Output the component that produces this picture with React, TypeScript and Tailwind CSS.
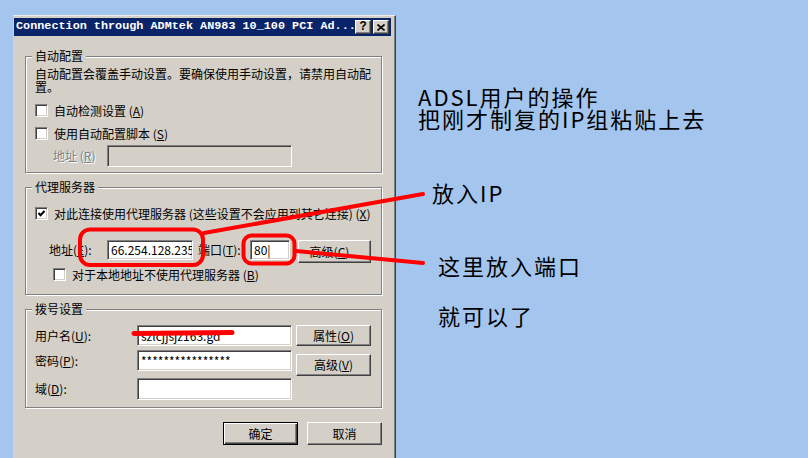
import React from 'react';

const ui = { fontFamily: '"Noto Sans CJK SC", "Noto Sans", sans-serif' };
const mono = { fontFamily: '"Liberation Mono", "DejaVu Sans Mono", monospace' };

function Hot({ k }: { k: string }) {
  return (
    <span>
      (<u>{k}</u>)
    </span>
  );
}

function Checkbox({ checked = false }: { checked?: boolean }) {
  return (
    <span className="w-[13px] h-[13px] shrink-0 bg-white border border-t-[#808080] border-l-[#808080] border-b-white border-r-white shadow-[inset_1px_1px_0_#404040,inset_-1px_-1px_0_#d4d0c8] flex items-center justify-center">
      {checked && (
        <svg width="9" height="9" viewBox="0 0 9 9">
          <polyline points="1.5,4 3.5,6.2 7.5,2" fill="none" stroke="#000" strokeWidth="2" />
        </svg>
      )}
    </span>
  );
}

function Field({ className = '', value = '', disabled = false }: { className?: string; value?: string; disabled?: boolean }) {
  return (
    <div
      className={`${className} shrink-0 flex items-center overflow-hidden whitespace-nowrap pl-[3px] text-[12px] leading-[14px] border border-t-[#808080] border-l-[#808080] border-b-white border-r-white shadow-[inset_1px_1px_0_#404040,inset_-1px_-1px_0_#d4d0c8] ${disabled ? 'bg-[#d4d0c8]' : 'bg-white'}`}
    >
      {value}
    </div>
  );
}

function Button({ children, className = '', primary = false }: { children: React.ReactNode; className?: string; primary?: boolean }) {
  return (
    <div
      className={`${className} shrink-0 flex items-center justify-center whitespace-nowrap overflow-hidden text-[12px] ${
        primary
          ? 'border border-black shadow-[inset_1px_1px_0_#fff,inset_-1px_-1px_0_#404040,inset_-2px_-2px_0_#808080]'
          : 'border border-t-white border-l-white border-b-[#404040] border-r-[#404040] shadow-[inset_-1px_-1px_0_#808080]'
      }`}
    >
      {children}
    </div>
  );
}

function Group({ title, children, className = '' }: { title: string; children: React.ReactNode; className?: string }) {
  return (
    <fieldset className={`${className} w-[357px] border border-[#808080] shadow-[1px_1px_0_#fff,inset_1px_1px_0_#fff] pl-[9px] pr-[8px]`}>
      <legend className="-ml-[3px] px-[3px] bg-[#d4d0c8] text-[12px] leading-[14px]">{title}</legend>
      {children}
    </fieldset>
  );
}

function TitleButton({ children }: { children: React.ReactNode }) {
  return (
    <div className="w-[16px] h-[14px] bg-[#d4d0c8] flex items-center justify-center border border-t-white border-l-white border-b-[#404040] border-r-[#404040] shadow-[inset_-1px_-1px_0_#808080]">
      {children}
    </div>
  );
}

function Dialog() {
  return (
    <div
      style={ui}
      className="ml-[13px] mt-[15px] w-[383px] h-[460px] shrink-0 bg-[#d4d0c8] border-t border-r border-t-[#eeece8] border-r-[#404040] shadow-[inset_-1px_0_0_#808080] pt-[2px] pl-px pr-[4px] text-black"
    >
      <div className="h-[18px] bg-[#0a246a] flex items-center pl-[2px] pr-[2px]">
        <span style={mono} className="flex-1 text-white font-bold text-[11.8px] whitespace-nowrap overflow-hidden">
          Connection through ADMtek AN983 10_100 PCI Ad...
        </span>
        <div className="flex gap-[2px]">
          <TitleButton>
            <span style={mono} className="text-[12px] font-bold leading-none">?</span>
          </TitleButton>
          <TitleButton>
            <svg width="8" height="7" viewBox="0 0 8 7">
              <path d="M0.5 0.5 L7.5 6.5 M7.5 0.5 L0.5 6.5" stroke="#000" strokeWidth="1.6" />
            </svg>
          </TitleButton>
        </div>
      </div>

      <div className="pl-[11px] flex flex-col">
        <Group title="自动配置" className="mt-[13px] pb-[5px]">
          <p className="pt-[4px] text-[12px] leading-[13px]">
            自动配置会覆盖手动设置。要确保使用手动设置，请禁用自动配置。
          </p>
          <div className="mt-[11px] flex items-center gap-[6px] text-[12px] leading-[13px]">
            <Checkbox />
            <span>
              自动检测设置 <Hot k="A" />
            </span>
          </div>
          <div className="mt-[10px] flex items-center gap-[6px] text-[12px] leading-[13px]">
            <Checkbox />
            <span>
              使用自动配置脚本 <Hot k="S" />
            </span>
          </div>
          <div className="mt-[5px] flex items-center text-[12px]">
            <span className="w-[54px] pl-[18px] whitespace-nowrap text-[#808080] [text-shadow:1px_1px_0_#fff]">
              地址 <Hot k="R" />
            </span>
            <Field className="ml-[18px] w-[185px] h-[22px]" disabled />
          </div>
        </Group>

        <Group title="代理服务器" className="mt-[7px] pb-[13px]">
          <div className="pt-[13px] flex items-center gap-[6px] text-[12px] leading-[13px]">
            <Checkbox checked />
            <span className="whitespace-nowrap">
              对此连接使用代理服务器 (这些设置不会应用到其它连接) <Hot k="X" />
            </span>
          </div>
          <div className="mt-[20px] flex items-start text-[12px]">
            <span className="w-[72px] h-[20px] pl-[14px] flex items-center whitespace-nowrap">
              地址 <Hot k="E" />:
            </span>
            <Field className="w-[86px] h-[20px]" value="66.254.128.235" />
            <span className="ml-[5px] w-[52px] h-[20px] flex items-center whitespace-nowrap">
              端口 <Hot k="T" />:
            </span>
            <Field className="w-[40px] h-[20px]" value="80|" />
            <Button className="ml-[8px] w-[73px] h-[23px]">
              高级 <Hot k="C" />...
            </Button>
          </div>
          <div className="mt-[5px] ml-[18px] flex items-center gap-[6px] text-[12px] leading-[13px]">
            <Checkbox />
            <span>
              对于本地地址不使用代理服务器 <Hot k="B" />
            </span>
          </div>
        </Group>

        <Group title="拨号设置" className="mt-[7px] pb-[7px]">
          <div className="pt-[9px] flex items-start text-[12px]">
            <span className="w-[102px] h-[21px] flex items-center">
              用户名 <Hot k="U" />:
            </span>
            <Field className="w-[155px] h-[21px]" value="szlcjjsjz163.gd" />
            <Button className="ml-[4px] w-[75px] h-[21px]">
              属性 <Hot k="O" />
            </Button>
          </div>
          <div className="mt-[4px] flex items-start text-[12px]">
            <span className="w-[102px] h-[21px] flex items-center">
              密码 <Hot k="P" />:
            </span>
            <Field className="w-[155px] h-[21px]" value="****************" />
            <Button className="ml-[4px] mt-[4px] w-[75px] h-[22px]">
              高级 <Hot k="V" />
            </Button>
          </div>
          <div className="mt-[2px] flex items-start text-[12px]">
            <span className="w-[102px] h-[22px] flex items-center">
              域 <Hot k="D" />:
            </span>
            <Field className="w-[155px] h-[22px]" />
          </div>
        </Group>

        <div className="mt-[14px] w-[357px] flex justify-end gap-[9px]">
          <Button primary className="w-[75px] h-[23px]">
            确定
          </Button>
          <Button className="w-[75px] h-[23px]">取消</Button>
        </div>
      </div>
    </div>
  );
}

export default function App() {
  return (
    <div className="relative w-[808px] h-[458px] overflow-hidden bg-[#a4c6ee] flex items-start">
      <Dialog />

      <div style={ui} className="pl-[22px] pt-[85px] flex flex-col text-black text-[22px] leading-[22px] tracking-[2px] whitespace-nowrap">
        <p>
          ADSL用户的操作
          <br />
          把刚才制复的IP组粘贴上去
        </p>
        <p className="mt-[52px] ml-[14px]">放入IP</p>
        <p className="mt-[51px] ml-[20px]">这里放入端口</p>
        <p className="mt-[28px] ml-[20px]">就可以了</p>
      </div>

      {/* red marks drawn over the screenshot */}
      <svg className="absolute inset-0 pointer-events-none" width="808" height="458" viewBox="0 0 808 458">
        <g fill="none" stroke="#ff0000" strokeWidth="4" strokeLinecap="round">
          <rect x="80" y="229.5" width="123" height="35.5" rx="10" />
          <rect x="243.5" y="235.5" width="51" height="28" rx="8" />
          <line x1="204" y1="233" x2="423" y2="194" />
          <line x1="296" y1="251" x2="423" y2="263" />
          <line x1="134" y1="333.5" x2="232" y2="332.5" strokeWidth="5" />
        </g>
      </svg>
    </div>
  );
}
